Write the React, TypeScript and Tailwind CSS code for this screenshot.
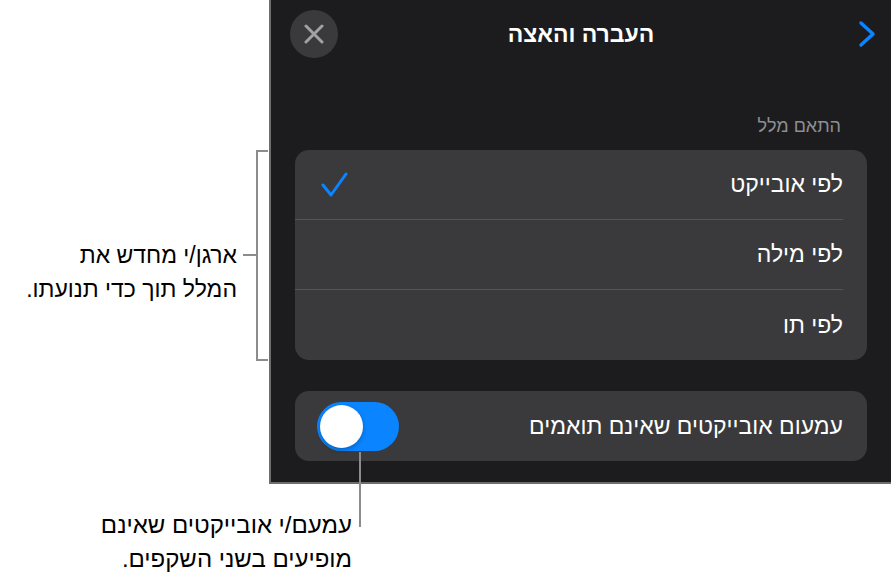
import React from 'react';

// Small inline icons drawn to match the reference strokes
function CloseIcon() {
  return (
    <svg width="20" height="20" viewBox="0 0 20 20" fill="none">
      <path d="M2 2 L18 18 M18 2 L2 18" stroke="#a1a1a6" strokeWidth="3" strokeLinecap="round" />
    </svg>
  );
}

function ChevronRight() {
  return (
    <svg width="20" height="28" viewBox="0 0 20 28" fill="none">
      <path d="M4 3 L16 14 L4 25" stroke="#0a84ff" strokeWidth="3.5" strokeLinecap="round" strokeLinejoin="round" />
    </svg>
  );
}

function CheckIcon() {
  return (
    <svg width="28" height="26" viewBox="0 0 28 26" fill="none">
      <path d="M2 13 L10 23 L25 2" stroke="#0a84ff" strokeWidth="3" strokeLinecap="round" strokeLinejoin="round" />
    </svg>
  );
}

const rows = [
  { label: 'לפי אובייקט', checked: true },
  { label: 'לפי מילה', checked: false },
  { label: 'לפי תו', checked: false },
];

export default function App() {
  return (
    <div
      className="relative w-[891px] h-[583px] bg-white overflow-hidden"
      style={{ fontFamily: '"Liberation Sans", "DejaVu Sans", sans-serif' }}
    >
      {/* --- TOP: callout + panel --- */}
      <div className="flex">
        {/* left callout */}
        <div className="w-[269px] h-[484px] pt-[150px] flex justify-end pr-[1px]">
          <div className="flex items-start h-[211px]">
            <div dir="rtl" className="mt-[88px] text-[23px] leading-[34px] text-black text-right whitespace-nowrap">
              <div>ארגן/י מחדש את</div>
              <div>המלל תוך כדי תנועתו.</div>
            </div>
            <div className="mt-[104px] ml-[6px] w-[13px] h-[2px] bg-[#8c8c8c]" />
            <div className="w-[12px] h-[211px] border-l-2 border-t-2 border-b-2 border-[#8c8c8c]" />
          </div>
        </div>

        {/* panel */}
        <div className="w-[622px] h-[484px] bg-[#1c1c1e] border-l-2 border-b-2 border-[#6e6e70]">
          {/* header */}
          <div className="relative h-[68px] flex items-center justify-between pl-[19px] pr-[14px]">
            <button className="w-[48px] h-[48px] rounded-full bg-[#3a3a3c] flex items-center justify-center">
              <CloseIcon />
            </button>
            <div dir="rtl" className="absolute left-0 right-0 text-center text-white font-bold text-[23px] pointer-events-none">
              העברה והאצה
            </div>
            <ChevronRight />
          </div>

          <div className="px-[24px]">
            <div dir="rtl" className="mt-[46px] pr-[26px] text-[18px] leading-[24px] text-[#8e8e93]">
              התאם מלל
            </div>

            {/* options card */}
            <div dir="rtl" className="mt-[12px] bg-[#3a3a3c] rounded-[14px] overflow-hidden">
              {rows.map((row, i) => (
                <div key={row.label} className="pr-[24px]">
                  <div
                    className={`h-[70px] flex items-center justify-between pl-[26px] ${
                      i < rows.length - 1 ? 'border-b border-[#545458]' : ''
                    }`}
                  >
                    <span className="text-white text-[23px]">{row.label}</span>
                    {row.checked && <CheckIcon />}
                  </div>
                </div>
              ))}
            </div>

            {/* toggle card */}
            <div dir="rtl" className="mt-[31px] h-[70px] bg-[#3a3a3c] rounded-[14px] flex items-center justify-between pr-[24px] pl-[22px]">
              <span className="text-white text-[23px]">עמעום אובייקטים שאינם תואמים</span>
              <div dir="ltr" className="w-[82px] h-[49px] rounded-full bg-[#0a84ff] flex items-center px-[3px]">
                <div className="w-[43px] h-[43px] rounded-full bg-white shadow-[0_2px_4px_rgba(0,0,0,0.25)]" />
              </div>
            </div>
          </div>
        </div>
      </div>

      {/* leader line from toggle to bottom callout */}
      <div className="absolute left-[359px] top-[452px] w-[2px] h-[75px] bg-[#8c8c8c]" />

      {/* --- BOTTOM: callout --- */}
      <div className="mt-[24px] w-[352px] flex justify-end">
        <div dir="rtl" className="text-[24px] leading-[34px] text-black text-right whitespace-nowrap">
          <div>עמעם/י אובייקטים שאינם</div>
          <div>מופיעים בשני השקפים.</div>
        </div>
      </div>
    </div>
  );
}
